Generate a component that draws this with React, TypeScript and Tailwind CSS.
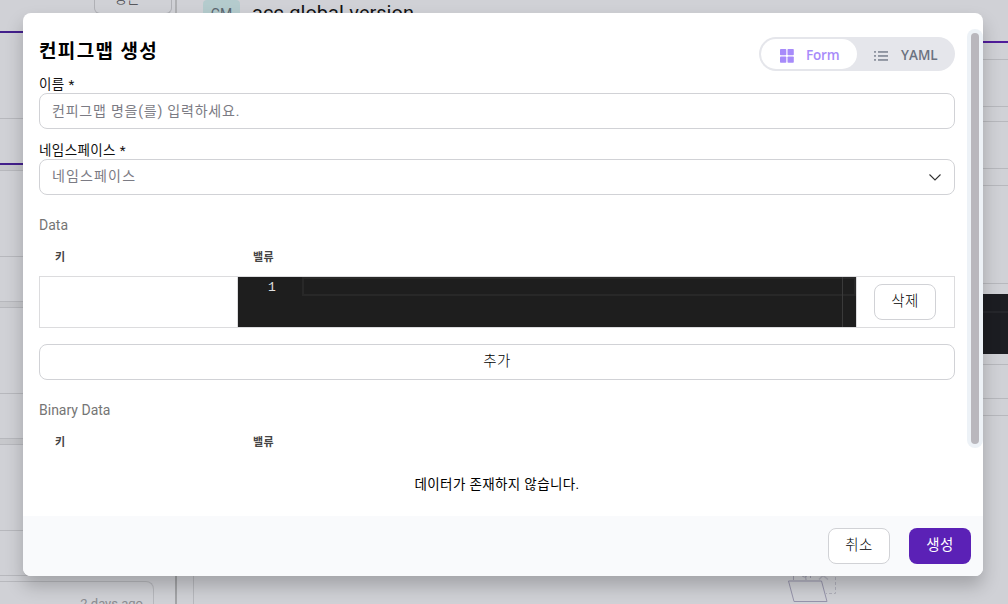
import React from "react";

const KR = "font-['Roboto','Noto_Sans_CJK_KR',sans-serif]";

function GridIcon() {
  return (
    <svg width="14" height="14" viewBox="0 0 14 14" fill="#a78bfa" className="mt-1 shrink-0">
      <rect x="0" y="0" width="6.3" height="6.3" rx="0.8" />
      <rect x="7.5" y="0" width="6.3" height="6.3" rx="0.8" />
      <rect x="0" y="7.5" width="6.3" height="6.3" rx="0.8" />
      <rect x="7.5" y="7.5" width="6.3" height="6.3" rx="0.8" />
    </svg>
  );
}

function ListIcon() {
  return (
    <svg width="14" height="12" viewBox="0 0 14 12" fill="#8f95a1" className="mt-1 shrink-0">
      <rect x="0" y="1" width="2" height="1.8" />
      <rect x="4" y="1" width="10" height="1.9" />
      <rect x="0" y="5" width="2" height="1.8" />
      <rect x="4" y="5" width="10" height="1.9" />
      <rect x="0" y="9" width="2" height="1.8" />
      <rect x="4" y="9" width="10" height="1.9" />
    </svg>
  );
}

function Stripes({ rows }: { rows: string[] }) {
  return (
    <>
      {rows.map((c, i) => (
        <div key={i} className={"shrink-0 " + c} />
      ))}
    </>
  );
}

const LINE = "h-px bg-[#b7b8bd]";
const GAP = "h-[5px] bg-[#c7c8cc]";

function Backdrop() {
  return (
    <div className="flex h-[604px] w-[1008px] overflow-hidden bg-[#d0d1d6]">
      <div className="flex w-[178px] shrink-0 flex-col">
        <div className="flex h-[31px] shrink-0">
          <div className="ml-[94px] flex h-[14px] w-[78px] items-end rounded-b-md border border-t-0 border-[#b0b1b6] pl-[19px]">
            <span className="whitespace-nowrap pb-[7px] text-sm leading-4 font-light text-[#3c3d42]">정은</span>
          </div>
          <div className="ml-[3px] h-[31px] w-[2px] bg-[#b0b1b4]" />
        </div>
        <Stripes
          rows={[
            "h-0.5 bg-[#43208c]",
            "h-[85px]",
            LINE,
            "h-[44px]",
            "h-0.5 bg-[#43208c]",
            GAP,
            LINE,
            "h-[85px]",
            LINE,
            "h-[44px]",
            LINE,
            GAP,
            LINE,
            "h-[85px]",
            LINE,
            "h-[44px]",
            LINE,
            GAP,
            LINE,
            "h-[85px]",
            LINE,
            "h-[44px]",
          ]}
        />
        <div className="flex h-[29px] shrink-0">
          <div className="flex w-[154px] flex-col border-t border-[#b7b8bd]">
            <div className="mt-[5px] flex h-[26px] justify-end rounded-tr-lg border-t border-r border-[#b7b8bd] pt-3.5 pr-2.5">
              <span className="whitespace-nowrap text-[13px] leading-4 text-[#8b8c91]">2 days ago</span>
            </div>
          </div>
          <div className="ml-[21px] w-[2px] bg-[#a3a4a7]" />
        </div>
      </div>
      <div className="flex grow flex-col">
        <div className="flex h-[28px] shrink-0 pl-[25px]">
          <div className="flex h-[24px] w-[37px] justify-center rounded bg-[#b4cbcd] pt-[6px]">
            <span className="text-sm leading-4 text-[#5b6670]">CM</span>
          </div>
          <span className="ml-3 whitespace-nowrap text-xl leading-[27px] text-[#131315]">acc-global-version</span>
        </div>
        <div className="mt-auto ml-[15px] flex h-[29px] border-l border-[#b7b8bd]">
          <svg width="60" height="29" viewBox="0 0 60 29" fill="none" className="ml-[590px]" stroke="#9694ab">
            <path d="M9.500 0V5M21.500 0l.5 5M26.500 0v3M17 0q4 4 7 0" stroke="#a3a2b2" />
            <path d="M4.500 6H37.500L43 26.500H10z" />
            <path d="M35 4.500l4-4 5 4" stroke="#b5b5c0" strokeWidth="1.500" />
            <path d="M51.500 2V18.500H42" strokeDasharray="3 2" stroke="#b0b0bb" />
          </svg>
        </div>
      </div>
      <div className="flex w-[25px] shrink-0 flex-col">
        <Stripes
          rows={[
            "h-[41px]",
            "h-0.5 bg-[#501d9b]",
            "h-[16px]",
            LINE,
            "h-[46px]",
            LINE,
            "h-[14px]",
            LINE,
            "h-[46px]",
            LINE,
            "h-[16px]",
            LINE,
            "h-[97px]",
            LINE,
            "h-[10px]",
            "h-[17px] bg-[#1c1d22]",
            "h-0.5 bg-[#25262b]",
            "h-[41px] bg-[#1c1d22]",
            "h-[10px]",
            LINE,
            "h-[33px]",
            LINE,
            "h-[16px]",
            LINE,
          ]}
        />
      </div>
    </div>
  );
}

function TableHead() {
  return (
    <div className="flex h-4 text-[11px] leading-[17px] font-bold text-[#444]">
      <span className="w-[198px] shrink-0 pl-4">키</span>
      <span className="pl-4 tracking-[0.400px]">밸류</span>
    </div>
  );
}

function Modal() {
  return (
    <div className="flex h-[563px] w-[960px] flex-col overflow-hidden rounded-lg bg-white">
      <div className="flex h-[503px] shrink-0">
        <div className="flex w-[944px] flex-col pl-4 pr-3">
          <div className="mt-6 flex h-[34px] items-start justify-between">
            <h1 className="mt-0.5 whitespace-nowrap text-[19px] leading-[26px] font-bold tracking-[1.350px] text-black">
              컨피그맵 생성
            </h1>
            <div className="flex h-[34px] w-[196px] rounded-full bg-[#e5e6eb] p-0.5 font-['Open_Sans',sans-serif] text-[13.500px] font-semibold">
              <div className="flex w-24 items-center rounded-full bg-white pl-[19px] text-[#a78bfa]">
                <GridIcon />
                <span className="mt-[3px] ml-3 tracking-[-0.200px]">Form</span>
              </div>
              <div className="flex items-center pl-[17px] text-[#6b7280]">
                <ListIcon />
                <span className="mt-[3px] ml-[13px]">YAML</span>
              </div>
            </div>
          </div>
          <label className="mt-[5px] h-[17px] whitespace-nowrap text-[13.500px] leading-4 tracking-[0.400px] text-[#111]">
            이름 *
          </label>
          <div className="flex h-9 items-center rounded-lg border border-[#d1d2d6] px-3 text-[14px] text-[#7b7b84]">
            <span className="mt-px whitespace-nowrap tracking-[0.780px]">컨피그맵 명을(를) 입력하세요.</span>
          </div>
          <label className="mt-[13px] h-[17px] whitespace-nowrap text-[13.500px] leading-4 tracking-[0.400px] text-[#111]">
            네임스페이스 *
          </label>
          <div className="flex h-9 items-center justify-between rounded-lg border border-[#d1d2d6] px-3 text-[14px] text-[#7b7b84]">
            <span className="mb-px whitespace-nowrap tracking-[1.150px]">네임스페이스</span>
            <svg width="14" height="8" viewBox="0 0 14 8" fill="none" stroke="#333" strokeWidth="1.100">
              <path d="M1.500 1.500l5.500 5.500 5.500-5.500" />
            </svg>
          </div>
          <div className="mt-[22px] text-sm leading-4 text-[#757575]">Data</div>
          <div className="mt-4">
            <TableHead />
          </div>
          <div className="mt-[11px] flex h-[52px] border border-[#dcdcde]">
            <div className="w-[198px] shrink-0 border-r border-[#dcdcde]" />
            <div className="flex w-[618px] shrink-0 bg-[#1e1e1e]">
              <span className="w-16 pt-[3px] pl-[30px] font-['Liberation_Mono',monospace] text-[13px] leading-4 text-[#e0e0e0]">
                1
              </span>
              <div className="flex grow">
                <div className="h-[19px] w-[540px] border-2 border-r-0 border-[#282828]" />
                <div className="w-[14px] border-l border-[#3a3a3a]">
                  <div className="h-[19px] border-2 border-l-0 border-[#282828]" />
                </div>
              </div>
            </div>
            <div className="flex grow items-center border-l border-[#dcdcde] pl-[17px]">
              <button className="h-9 w-[62px] rounded-lg border border-[#d1d2d6] text-[14.500px] font-light tracking-[0.500px] text-black">
                삭제
              </button>
            </div>
          </div>
          <button className="mt-4 h-9 rounded-lg border border-[#d1d2d6] text-[14.500px] font-light tracking-[0.500px] text-black">
            추가
          </button>
          <div className="mt-[22px] text-sm leading-4 text-[#757575]">Binary Data</div>
          <div className="mt-4">
            <TableHead />
          </div>
          <div className="mt-[26px] text-center text-[13.500px] leading-4 tracking-[0.380px] text-black">
            데이터가 존재하지 않습니다.
          </div>
        </div>
        <div className="mt-4 h-[419px] w-4 rounded-full bg-[#edf2f7] p-1">
          <div className="h-full rounded-full bg-[#b9b7bd]" />
        </div>
      </div>
      <div className="flex h-[60px] items-center justify-end gap-[19px] bg-[#f9fafc] pr-3">
        <button className="h-9 w-[62px] rounded-lg border border-[#d1d2d6] bg-white text-[14.500px] font-light tracking-[0.500px] text-black">
          취소
        </button>
        <button className="h-9 w-[62px] rounded-lg bg-[#5b21b6] text-[14.500px] tracking-[0.500px] text-white">생성</button>
      </div>
    </div>
  );
}

export default function App() {
  return (
    <div className={"relative h-[604px] w-[1008px] overflow-hidden " + KR}>
      <Backdrop />
      <div className="absolute top-[13px] left-[23px] rounded-lg shadow-[0_10px_18px_rgba(0,0,0,0.22)]">
        <Modal />
      </div>
    </div>
  );
}
